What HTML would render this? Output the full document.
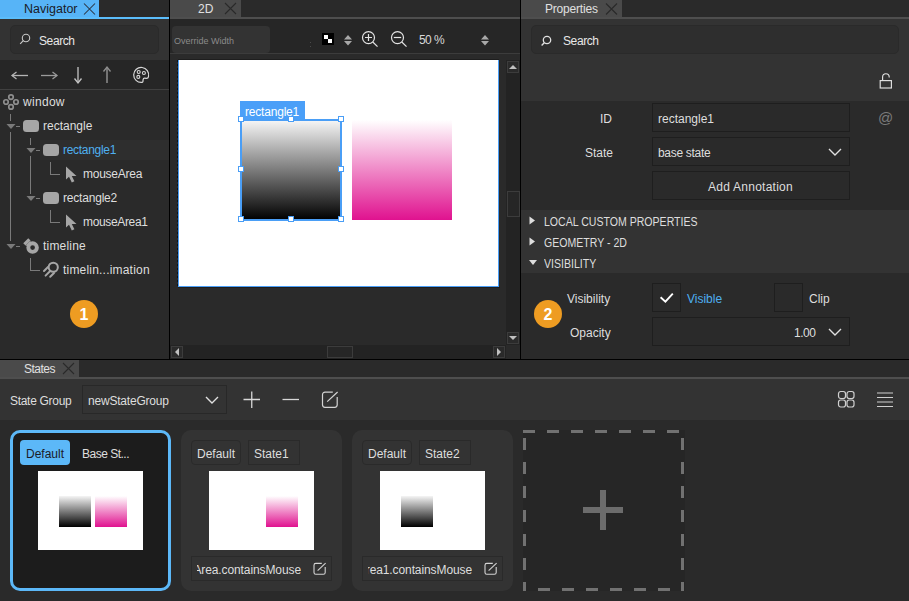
<!DOCTYPE html>
<html><head><meta charset="utf-8">
<style>
*{box-sizing:border-box;margin:0;padding:0}
html,body{width:909px;height:601px;overflow:hidden;background:#111;font-family:"Liberation Sans",sans-serif;color:#dcdcdc;font-size:12px}
.a{position:absolute}
.t{position:absolute;white-space:nowrap;line-height:1}
svg{position:absolute;overflow:visible}
</style></head><body>
<div class="a" style="left:0px;top:0px;width:169px;height:359px;background:#2a2a2a;"></div>
<div class="a" style="left:0px;top:0px;width:169px;height:17px;background:#2a2a2a;"></div>
<div class="a" style="left:0px;top:0px;width:99px;height:17px;background:#57b4f7;"></div>
<div class="a" style="left:0px;top:17px;width:169px;height:2px;background:#5bbdfb;"></div>
<div class="t" style="left:24px;top:3.00px;font-size:12.5px;color:#1b1b28;">Navigator</div>
<svg style="left:83px;top:2px;" width="13" height="13" viewBox="0 0 13 13"><path d="M1 1.5L12 12.5M12 1.5L1 12.5" stroke="#2a3340" stroke-width="1.05"/></svg>
<div class="a" style="left:0px;top:19px;width:169px;height:41px;background:#333333;"></div>
<div class="a" style="left:10px;top:25px;width:149px;height:29px;background:#2e2e2e;border:1px solid #2a2a2a;border-radius:5px"></div>
<svg style="left:18px;top:32px;" width="14" height="14" viewBox="0 0 14 14"><circle cx="8" cy="6" r="3.7" fill="none" stroke="#c8c8c8" stroke-width="1.1"/><path d="M5.3 8.7L2.2 11.8" stroke="#c8c8c8" stroke-width="1.2"/></svg>
<div class="t" style="left:39px;top:35.00px;font-size:12px;color:#e8e8e8;letter-spacing:-0.4px">Search</div>
<div class="a" style="left:0px;top:60px;width:169px;height:29px;background:#262626;"></div>
<div class="a" style="left:0px;top:89px;width:169px;height:1px;background:#404040;"></div>
<svg style="left:10px;top:70px;" width="20" height="12" viewBox="0 0 20 12"><path d="M2 5.5H18" stroke="#b4b4b4" stroke-width="1.3"/><path d="M6.5 2L2 5.5L6.5 9" fill="none" stroke="#b4b4b4" stroke-width="1.3"/></svg>
<svg style="left:39px;top:70px;" width="20" height="12" viewBox="0 0 20 12"><path d="M2 5.5H18" stroke="#9a9a9a" stroke-width="1.3"/><path d="M13.5 2L18 5.5L13.5 9" fill="none" stroke="#9a9a9a" stroke-width="1.3"/></svg>
<svg style="left:72px;top:65px;" width="12" height="20" viewBox="0 0 12 20"><path d="M6 2V18" stroke="#c4c4c4" stroke-width="1.3"/><path d="M2.5 13.5L6 18L9.5 13.5" fill="none" stroke="#c4c4c4" stroke-width="1.3"/></svg>
<svg style="left:101px;top:65px;" width="12" height="20" viewBox="0 0 12 20"><path d="M6 2V18" stroke="#8e8e8e" stroke-width="1.5"/><path d="M2.5 6.5L6 2L9.5 6.5" fill="none" stroke="#8e8e8e" stroke-width="1.3"/></svg>
<svg style="left:132px;top:66px;" width="18" height="18" viewBox="0 0 18 18"><path d="M9.8 16.4A7.5 7.5 0 1 1 16.5 10.6Q16.2 12.4 14.2 12.3L12.8 12.1Q11.3 12 11.1 13.6L10.9 15.6Q10.7 16.4 9.8 16.4Z" fill="none" stroke="#d8d8d8" stroke-width="1.2"/><g fill="none" stroke="#d8d8d8" stroke-width="1.1"><circle cx="6.7" cy="6" r="1.5"/><circle cx="11.9" cy="7" r="1.5"/><circle cx="6.3" cy="10.9" r="1.5"/></g></svg>
<div class="a" style="left:40px;top:140px;width:129px;height:20px;background:#2e2e2e;"></div>
<svg style="left:2px;top:92px;" width="20" height="20" viewBox="0 0 20 20"><g fill="none" stroke="#8e8e8e" stroke-width="1.7"><circle cx="9" cy="5.1" r="2.25"/><circle cx="4" cy="10" r="2.25"/><circle cx="14" cy="10" r="2.25"/><circle cx="9" cy="14.9" r="2.25"/></g></svg>
<div class="t" style="left:23px;top:96.00px;font-size:12px;color:#dedede;letter-spacing:0.3px">window</div>
<div class="a" style="left:10px;top:114px;width:1px;height:7px;background:#7a7a7a;"></div>
<div class="a" style="left:10px;top:132px;width:1px;height:109px;background:#7a7a7a;"></div>
<svg style="left:5.5px;top:124px;" width="10" height="6" viewBox="0 0 10 6"><path d="M0.5 0H9.5L5 5Z" fill="#7a7a7a"/></svg>
<div class="a" style="left:16px;top:126px;width:4px;height:1px;background:#7a7a7a;"></div>
<div class="a" style="left:23px;top:120px;width:16px;height:12px;background:#a6a6a6;border-radius:3.5px"></div>
<div class="t" style="left:43px;top:120.00px;font-size:12px;color:#dedede;">rectangle</div>
<div class="a" style="left:30px;top:138px;width:1px;height:7px;background:#7a7a7a;"></div>
<div class="a" style="left:30px;top:156px;width:1px;height:38px;background:#7a7a7a;"></div>
<svg style="left:25.5px;top:148px;" width="10" height="6" viewBox="0 0 10 6"><path d="M0.5 0H9.5L5 5Z" fill="#7a7a7a"/></svg>
<div class="a" style="left:36px;top:150px;width:4px;height:1px;background:#7a7a7a;"></div>
<div class="a" style="left:43px;top:144px;width:16px;height:12px;background:#a6a6a6;border-radius:3.5px"></div>
<div class="t" style="left:63px;top:144.00px;font-size:12px;color:#4fb0f0;letter-spacing:-0.3px">rectangle1</div>
<div class="a" style="left:50px;top:162px;width:1px;height:13px;background:#7a7a7a;"></div>
<div class="a" style="left:50px;top:174px;width:10px;height:1px;background:#7a7a7a;"></div>
<svg style="left:65px;top:166px;" width="12" height="17" viewBox="0 0 12 17"><path d="M1 0.5V13.5L4 10.8L6.8 16.5L9.4 15.3L6.8 10H11.5Z" fill="#a6a6a6"/></svg>
<div class="t" style="left:83px;top:168.00px;font-size:12px;color:#dedede;letter-spacing:-0.25px">mouseArea</div>
<svg style="left:25.5px;top:196px;" width="10" height="6" viewBox="0 0 10 6"><path d="M0.5 0H9.5L5 5Z" fill="#7a7a7a"/></svg>
<div class="a" style="left:36px;top:198px;width:4px;height:1px;background:#7a7a7a;"></div>
<div class="a" style="left:43px;top:192px;width:16px;height:12px;background:#a6a6a6;border-radius:3.5px"></div>
<div class="t" style="left:63px;top:192.00px;font-size:12px;color:#dedede;letter-spacing:-0.2px">rectangle2</div>
<div class="a" style="left:50px;top:210px;width:1px;height:13px;background:#7a7a7a;"></div>
<div class="a" style="left:50px;top:222px;width:10px;height:1px;background:#7a7a7a;"></div>
<svg style="left:65px;top:214px;" width="12" height="17" viewBox="0 0 12 17"><path d="M1 0.5V13.5L4 10.8L6.8 16.5L9.4 15.3L6.8 10H11.5Z" fill="#a6a6a6"/></svg>
<div class="t" style="left:83px;top:216.00px;font-size:12px;color:#dedede;letter-spacing:-0.35px">mouseArea1</div>
<svg style="left:5.5px;top:244px;" width="10" height="6" viewBox="0 0 10 6"><path d="M0.5 0H9.5L5 5Z" fill="#7a7a7a"/></svg>
<div class="a" style="left:16px;top:246px;width:4px;height:1px;background:#7a7a7a;"></div>
<svg style="left:22px;top:236px;" width="20" height="20" viewBox="0 0 20 20"><circle cx="10.6" cy="11.6" r="4.3" fill="none" stroke="#a6a6a6" stroke-width="3.9"/><path d="M2.4 8.4L7.4 3.4" stroke="#a6a6a6" stroke-width="3.3"/><path d="M3.6 9.6L8.2 5L9.8 8L7.2 10.6Z" fill="#a6a6a6"/></svg>
<div class="t" style="left:43px;top:240.00px;font-size:12px;color:#dedede;letter-spacing:0.2px">timeline</div>
<div class="a" style="left:30px;top:258px;width:1px;height:13px;background:#7a7a7a;"></div>
<div class="a" style="left:30px;top:270px;width:10px;height:1px;background:#7a7a7a;"></div>
<svg style="left:43px;top:261px;" width="17" height="17" viewBox="0 0 17 17"><g fill="none" stroke="#a6a6a6" stroke-width="2" stroke-linecap="round"><circle cx="10.25" cy="6.25" r="4.6"/><path d="M1 10L5 6M2.6 14.6L7.4 9.8M7.2 15.8L11 12"/></g></svg>
<div class="t" style="left:63px;top:264.00px;font-size:12px;color:#dedede;letter-spacing:0.2px">timelin...imation</div>
<div class="a" style="left:70px;top:300px;width:28px;height:28px;border-radius:50%;background:#ee9c22"></div>
<div class="t" style="left:79.5px;top:307.00px;font-size:16px;color:#ffffff;font-weight:bold">1</div>
<div class="a" style="left:169px;top:0px;width:1px;height:359px;background:#000;"></div>
<div class="a" style="left:520px;top:0px;width:1px;height:359px;background:#000;"></div>
<div class="a" style="left:0px;top:359px;width:909px;height:1px;background:#000;"></div>
<div class="a" style="left:170px;top:0px;width:350px;height:359px;background:#2a2a2a;"></div>
<div class="a" style="left:170px;top:0px;width:350px;height:17px;background:#2a2a2a;"></div>
<div class="a" style="left:170px;top:0px;width:71px;height:17px;background:#4a4a4a;"></div>
<div class="a" style="left:170px;top:17px;width:350px;height:2px;background:#4e4e4e;"></div>
<div class="t" style="left:198px;top:3.00px;font-size:12px;color:#e0e0e0;">2D</div>
<svg style="left:224px;top:2px;" width="13" height="13" viewBox="0 0 13 13"><path d="M1 1L12 12M12 1L1 12" stroke="#2a2a2a" stroke-width="1.1"/></svg>
<div class="a" style="left:170px;top:19px;width:350px;height:34px;background:#262626;"></div>
<div class="a" style="left:172px;top:26px;width:98px;height:27px;background:#333333;border-radius:4px"></div>
<div class="t" style="left:174px;top:37.00px;font-size:9px;color:#8a8a8a;">Override Width</div>
<div class="a" style="left:170px;top:53px;width:350px;height:1px;background:#3c3c3c;"></div>
<div class="a" style="left:310px;top:42px;width:1px;height:1px;background:#4a4a4a;"></div>
<div class="a" style="left:310px;top:46px;width:1px;height:1px;background:#4a4a4a;"></div>
<div class="a" style="left:322px;top:33px;width:12px;height:12px;background:#000;"></div>
<div class="a" style="left:324px;top:35px;width:4px;height:4px;background:#fff;"></div>
<div class="a" style="left:328px;top:39px;width:4px;height:4px;background:#fff;"></div>
<svg style="left:344px;top:34.5px;" width="8" height="11" viewBox="0 0 8 11"><path d="M0 4.5L4 0L8 4.5Z M0 6L4 10.5L8 6Z" fill="#a8a8a8"/></svg>
<svg style="left:360px;top:30px;" width="20" height="18" viewBox="0 0 20 18"><g fill="none" stroke="#e4e4e4" stroke-width="1.2"><circle cx="8.5" cy="7.6" r="6"/><path d="M12.8 12L17.5 16.6"/><path d="M5 7.5H12M8.5 4V11"/></g></svg>
<svg style="left:389px;top:30px;" width="20" height="18" viewBox="0 0 20 18"><g fill="none" stroke="#e4e4e4" stroke-width="1.2"><circle cx="8.5" cy="7.6" r="6"/><path d="M12.8 12L17.5 16.6"/><path d="M4.8 7.5H12.2"/></g></svg>
<div class="t" style="left:419px;top:34.00px;font-size:12px;color:#d8d8d8;letter-spacing:-0.6px">50 %</div>
<svg style="left:481px;top:34.5px;" width="8" height="11" viewBox="0 0 8 11"><path d="M0 4.5L4 0L8 4.5Z M0 6L4 10.5L8 6Z" fill="#a8a8a8"/></svg>
<div class="a" style="left:178px;top:60px;width:321px;height:227px;background:#ffffff;border:1px solid #4a9ff8;border-top:0"></div>
<div class="a" style="left:177px;top:60px;width:1px;height:227px;background:repeating-linear-gradient(#111 0 2px,transparent 2px 4px);"></div>
<div class="a" style="left:178px;top:59px;width:321px;height:1px;background:#1e1e1e;"></div>
<div class="a" style="left:178px;top:287px;width:322px;height:1px;background:#1e1e1e;"></div>
<div class="a" style="left:241px;top:120px;width:101px;height:100px;background:linear-gradient(#f7f7f7,#000)"></div>
<div class="a" style="left:352px;top:120px;width:100px;height:100px;background:linear-gradient(#ffffff,#e0128f)"></div>
<div class="a" style="left:240px;top:101px;width:65px;height:19px;background:#4a9ff8;"></div>
<div class="t" style="left:245px;top:106.00px;font-size:12px;color:#ffffff;letter-spacing:-0.2px">rectangle1</div>
<div class="a" style="left:240px;top:119px;width:102px;height:102px;border:2px solid #4a9ef6"></div>
<div class="a" style="left:238px;top:116px;width:6px;height:6px;background:#fff;border:1px solid #4a9ef6"></div>
<div class="a" style="left:238px;top:166px;width:6px;height:6px;background:#fff;border:1px solid #4a9ef6"></div>
<div class="a" style="left:238px;top:216px;width:6px;height:6px;background:#fff;border:1px solid #4a9ef6"></div>
<div class="a" style="left:288px;top:116px;width:6px;height:6px;background:#fff;border:1px solid #4a9ef6"></div>
<div class="a" style="left:288px;top:216px;width:6px;height:6px;background:#fff;border:1px solid #4a9ef6"></div>
<div class="a" style="left:338px;top:116px;width:6px;height:6px;background:#fff;border:1px solid #4a9ef6"></div>
<div class="a" style="left:338px;top:166px;width:6px;height:6px;background:#fff;border:1px solid #4a9ef6"></div>
<div class="a" style="left:338px;top:216px;width:6px;height:6px;background:#fff;border:1px solid #4a9ef6"></div>
<div class="a" style="left:506px;top:60px;width:14px;height:285px;background:#232323;"></div>
<div class="a" style="left:507px;top:61px;width:12px;height:12px;background:#2a2a2a;border:1px solid #3c3c3c"></div>
<svg style="left:509px;top:64px;" width="8" height="6" viewBox="0 0 8 6"><path d="M0 5L4 1L8 5Z" fill="#c0c0c0"/></svg>
<div class="a" style="left:507px;top:191px;width:13px;height:26px;background:#262626;border:1px solid #3c3c3c"></div>
<div class="a" style="left:507px;top:332px;width:12px;height:12px;background:#2a2a2a;border:1px solid #3c3c3c"></div>
<svg style="left:509px;top:335px;" width="8" height="6" viewBox="0 0 8 6"><path d="M0 1H8L4 5Z" fill="#c0c0c0"/></svg>
<div class="a" style="left:170px;top:345px;width:336px;height:14px;background:#232323;"></div>
<div class="a" style="left:171px;top:346px;width:12px;height:12px;background:#2a2a2a;border:1px solid #3c3c3c"></div>
<svg style="left:174px;top:348px;" width="6" height="8" viewBox="0 0 6 8"><path d="M5 0V8L1 4Z" fill="#c0c0c0"/></svg>
<div class="a" style="left:327px;top:346px;width:26px;height:12px;background:#262626;border:1px solid #3c3c3c"></div>
<div class="a" style="left:493px;top:346px;width:12px;height:12px;background:#2a2a2a;border:1px solid #3c3c3c"></div>
<svg style="left:496px;top:348px;" width="6" height="8" viewBox="0 0 6 8"><path d="M1 0V8L5 4Z" fill="#c0c0c0"/></svg>
<div class="a" style="left:521px;top:0px;width:388px;height:359px;background:#2a2a2a;"></div>
<div class="a" style="left:521px;top:0px;width:388px;height:17px;background:#2a2a2a;"></div>
<div class="a" style="left:521px;top:0px;width:101px;height:17px;background:#4a4a4a;"></div>
<div class="a" style="left:521px;top:17px;width:388px;height:2px;background:#4e4e4e;"></div>
<div class="t" style="left:545px;top:3.00px;font-size:12px;color:#e0e0e0;letter-spacing:-0.2px">Properties</div>
<svg style="left:605px;top:2px;" width="13" height="13" viewBox="0 0 13 13"><path d="M1 1.5L12 12.5M12 1.5L1 12.5" stroke="#2a2a2a" stroke-width="1.1"/></svg>
<div class="a" style="left:521px;top:19px;width:388px;height:82px;background:#333333;"></div>
<div class="a" style="left:531px;top:25px;width:368px;height:29px;background:#2e2e2e;border:1px solid #2a2a2a;border-radius:5px"></div>
<svg style="left:538.5px;top:33.5px;" width="14" height="14" viewBox="0 0 14 14"><circle cx="8" cy="6" r="3.7" fill="none" stroke="#e0e0e0" stroke-width="1.3"/><path d="M5.3 8.7L2.6 11.4" stroke="#e0e0e0" stroke-width="1.4"/></svg>
<div class="t" style="left:563px;top:35.00px;font-size:12px;color:#e8e8e8;letter-spacing:-0.4px">Search</div>
<svg style="left:878px;top:72px;" width="16" height="18" viewBox="0 0 16 18"><path d="M4.6 8.6V5A3.3 3.3 0 0 1 11.2 5V5.6" fill="none" stroke="#e2e2e2" stroke-width="1.15"/><rect x="2.2" y="8.6" width="11.2" height="7.4" fill="none" stroke="#e2e2e2" stroke-width="1.15"/></svg>
<div class="t" style="left:600px;top:113.00px;font-size:12px;color:#dedede;">ID</div>
<div class="a" style="left:652px;top:103px;width:198px;height:29px;background:transparent;border:1px solid #1e1e1e"></div>
<div class="t" style="left:658px;top:113.00px;font-size:12px;color:#dedede;">rectangle1</div>
<div class="t" style="left:878px;top:110.00px;font-size:15px;color:#7a7a7a;">@</div>
<div class="t" style="left:585px;top:147.00px;font-size:12px;color:#dedede;">State</div>
<div class="a" style="left:652px;top:137px;width:198px;height:29px;background:transparent;border:1px solid #1e1e1e"></div>
<div class="t" style="left:658px;top:147.00px;font-size:12px;color:#dedede;letter-spacing:-0.3px">base state</div>
<svg style="left:828px;top:148px;" width="14" height="9" viewBox="0 0 14 9"><path d="M1 1L7 7L13 1" fill="none" stroke="#e0e0e0" stroke-width="1.4"/></svg>
<div class="a" style="left:652px;top:171px;width:198px;height:29px;background:transparent;border:1px solid #1e1e1e"></div>
<div class="t" style="left:708px;top:181.00px;font-size:12px;color:#dedede;letter-spacing:0.25px">Add Annotation</div>
<div class="a" style="left:521px;top:210px;width:388px;height:63px;background:#333333;"></div>
<svg style="left:529px;top:216px;" width="7" height="9" viewBox="0 0 7 9"><path d="M0.5 0.5L6 4.5L0.5 8.5Z" fill="#dedede"/></svg>
<div class="t" style="left:544px;top:216.00px;font-size:12px;color:#dedede;transform:scaleX(0.88);transform-origin:0 0">LOCAL CUSTOM PROPERTIES</div>
<svg style="left:529px;top:237px;" width="7" height="9" viewBox="0 0 7 9"><path d="M0.5 0.5L6 4.5L0.5 8.5Z" fill="#dedede"/></svg>
<div class="t" style="left:544px;top:237.00px;font-size:12px;color:#dedede;transform:scaleX(0.88);transform-origin:0 0">GEOMETRY - 2D</div>
<svg style="left:529px;top:260px;" width="9" height="7" viewBox="0 0 9 7"><path d="M0 0H8L4 5Z" fill="#dedede"/></svg>
<div class="t" style="left:544px;top:258.00px;font-size:12px;color:#dedede;transform:scaleX(0.88);transform-origin:0 0">VISIBILITY</div>
<div class="t" style="left:567px;top:293.00px;font-size:12px;color:#dedede;">Visibility</div>
<div class="a" style="left:652px;top:283px;width:29px;height:29px;background:transparent;border:1px solid #1e1e1e"></div>
<svg style="left:659px;top:290px;" width="15" height="14" viewBox="0 0 15 14"><path d="M1.6 7.3L6.4 11.6L13.8 3.6" fill="none" stroke="#ffffff" stroke-width="1.9"/></svg>
<div class="t" style="left:687px;top:293.00px;font-size:12px;color:#4fb0f0;">Visible</div>
<div class="a" style="left:774px;top:283px;width:29px;height:29px;background:transparent;border:1px solid #1e1e1e"></div>
<div class="t" style="left:809px;top:293.00px;font-size:12px;color:#dedede;">Clip</div>
<div class="t" style="left:570px;top:327.00px;font-size:12px;color:#dedede;">Opacity</div>
<div class="a" style="left:652px;top:317px;width:198px;height:29px;background:transparent;border:1px solid #1e1e1e"></div>
<div class="t" style="left:794px;top:327.00px;font-size:12px;color:#dedede;letter-spacing:-0.5px">1.00</div>
<svg style="left:828px;top:328px;" width="14" height="9" viewBox="0 0 14 9"><path d="M1 1L7 7L13 1" fill="none" stroke="#e0e0e0" stroke-width="1.4"/></svg>
<div class="a" style="left:534px;top:300px;width:28px;height:28px;border-radius:50%;background:#ee9c22"></div>
<div class="t" style="left:543.5px;top:307.00px;font-size:16px;color:#ffffff;font-weight:bold">2</div>
<div class="a" style="left:0px;top:360px;width:909px;height:241px;background:#2a2a2a;"></div>
<div class="a" style="left:0px;top:360px;width:909px;height:17px;background:#2a2a2a;"></div>
<div class="a" style="left:0px;top:360px;width:79px;height:17px;background:#4a4a4a;"></div>
<div class="a" style="left:0px;top:377px;width:909px;height:2px;background:#4e4e4e;"></div>
<div class="t" style="left:24px;top:363.00px;font-size:12px;color:#e0e0e0;letter-spacing:-0.5px">States</div>
<svg style="left:62px;top:362px;" width="13" height="13" viewBox="0 0 13 13"><path d="M1 1L12 12M12 1L1 12" stroke="#2a2a2a" stroke-width="1.1"/></svg>
<div class="a" style="left:0px;top:379px;width:909px;height:41px;background:#333333;"></div>
<div class="t" style="left:10px;top:395.00px;font-size:12px;color:#dedede;letter-spacing:-0.3px">State Group</div>
<div class="a" style="left:82px;top:385px;width:145px;height:29px;background:transparent;border:1px solid #282828"></div>
<div class="t" style="left:88px;top:395.00px;font-size:12px;color:#dedede;letter-spacing:-0.2px">newStateGroup</div>
<svg style="left:205px;top:396px;" width="14" height="9" viewBox="0 0 14 9"><path d="M1 1L7 7L13 1" fill="none" stroke="#e0e0e0" stroke-width="1.4"/></svg>
<svg style="left:242px;top:390px;" width="20" height="20" viewBox="0 0 20 20"><path d="M1.5 9.5H18M9.75 1.5V18" stroke="#d8d8d8" stroke-width="1.3"/></svg>
<svg style="left:281px;top:390px;" width="20" height="20" viewBox="0 0 20 20"><path d="M1.5 9.5H18" stroke="#d8d8d8" stroke-width="1.3"/></svg>
<svg style="left:320px;top:389px;" width="20" height="20" viewBox="0 0 20 20"><path d="M12.8 3.2H5A2.5 2.5 0 0 0 2.5 5.7V15.8A2.5 2.5 0 0 0 5 18.3H14.7A2.5 2.5 0 0 0 17.2 15.8V8" fill="none" stroke="#d4d4d4" stroke-width="1.2"/><path d="M7.2 12.6L17.6 3" stroke="#d4d4d4" stroke-width="1.2"/></svg>
<svg style="left:837px;top:390px;" width="20" height="20" viewBox="0 0 20 20"><g fill="none" stroke="#d0d0d0" stroke-width="1.2"><rect x="1.5" y="1.5" width="7" height="7" rx="2.2"/><rect x="10" y="1.5" width="7" height="7" rx="2.2"/><rect x="1.5" y="10" width="7" height="7" rx="2.2"/><rect x="10" y="10" width="7" height="7" rx="2.2"/></g></svg>
<svg style="left:876px;top:391px;" width="18" height="18" viewBox="0 0 18 18"><path d="M1 2H17M1 6.5H17M1 11H17M1 15.5H17" stroke="#d0d0d0" stroke-width="1.2"/></svg>
<div class="a" style="left:10px;top:430px;width:161px;height:161px;border:3px solid #5cb8f8;border-radius:10px;background:#1c1c1c"></div>
<div class="a" style="left:20px;top:440px;width:50px;height:25px;background:#5cb8f8;border-radius:4px"></div>
<div class="t" style="left:26px;top:448.00px;font-size:12px;color:#1b1b28;">Default</div>
<div class="t" style="left:82px;top:448.00px;font-size:12px;color:#dedede;letter-spacing:-0.5px">Base St...</div>
<div class="a" style="left:38px;top:471px;width:105px;height:79px;background:#ffffff;"></div>
<div class="a" style="left:59px;top:496px;width:32px;height:31px;background:linear-gradient(#f5f5f5,#000)"></div>
<div class="a" style="left:95px;top:496px;width:32px;height:31px;background:linear-gradient(#ffffff,#e0128f)"></div>
<div class="a" style="left:181px;top:430px;width:161px;height:161px;background:#333333;border-radius:10px"></div>
<div class="a" style="left:191px;top:440px;width:50px;height:25px;background:transparent;border:1px solid #2a2a2a;border-radius:4px"></div>
<div class="t" style="left:197px;top:448.00px;font-size:12px;color:#dedede;">Default</div>
<div class="a" style="left:248px;top:440px;width:52px;height:25px;background:transparent;border:1px solid #2a2a2a"></div>
<div class="t" style="left:254px;top:448.00px;font-size:12px;color:#dedede;">State1</div>
<div class="a" style="left:209px;top:471px;width:105px;height:79px;background:#ffffff;"></div>
<div class="a" style="left:266px;top:496px;width:32px;height:31px;background:linear-gradient(#ffffff,#e0128f)"></div>
<div class="a" style="left:191px;top:556px;width:141px;height:25px;background:transparent;border:1px solid #2a2a2a"></div>
<div class="a" style="left:197px;top:560px;width:104px;height:18px;overflow:hidden"><div class="t" style="right:0;top:4px;font-size:12px;color:#dedede;letter-spacing:-0.1px">mouseArea.containsMouse</div></div>
<svg style="left:312px;top:561px;" width="15" height="15" viewBox="0 0 15 15"><path d="M9.8 2.4H3.8A1.8 1.8 0 0 0 2 4.2V11.4A1.8 1.8 0 0 0 3.8 13.2H11.4A1.8 1.8 0 0 0 13.2 11.4V6" fill="none" stroke="#d4d4d4" stroke-width="1.1"/><path d="M5.6 9.6L13.6 2.2" stroke="#d4d4d4" stroke-width="1.1"/></svg>
<div class="a" style="left:352px;top:430px;width:161px;height:161px;background:#333333;border-radius:10px"></div>
<div class="a" style="left:362px;top:440px;width:50px;height:25px;background:transparent;border:1px solid #2a2a2a;border-radius:4px"></div>
<div class="t" style="left:368px;top:448.00px;font-size:12px;color:#dedede;">Default</div>
<div class="a" style="left:419px;top:440px;width:52px;height:25px;background:transparent;border:1px solid #2a2a2a"></div>
<div class="t" style="left:425px;top:448.00px;font-size:12px;color:#dedede;">State2</div>
<div class="a" style="left:380px;top:471px;width:105px;height:79px;background:#ffffff;"></div>
<div class="a" style="left:401px;top:496px;width:32px;height:31px;background:linear-gradient(#f5f5f5,#000)"></div>
<div class="a" style="left:362px;top:556px;width:141px;height:25px;background:transparent;border:1px solid #2a2a2a"></div>
<div class="a" style="left:368px;top:560px;width:104px;height:18px;overflow:hidden"><div class="t" style="right:0;top:4px;font-size:12px;color:#dedede;letter-spacing:-0.1px">mouseArea1.containsMouse</div></div>
<svg style="left:483px;top:561px;" width="15" height="15" viewBox="0 0 15 15"><path d="M9.8 2.4H3.8A1.8 1.8 0 0 0 2 4.2V11.4A1.8 1.8 0 0 0 3.8 13.2H11.4A1.8 1.8 0 0 0 13.2 11.4V6" fill="none" stroke="#d4d4d4" stroke-width="1.1"/><path d="M5.6 9.6L13.6 2.2" stroke="#d4d4d4" stroke-width="1.1"/></svg>
<svg style="left:522px;top:430px;" width="163" height="161" viewBox="0 0 163 161"><rect x="1" y="0" width="162" height="161" fill="#262626"/><g fill="none" stroke="#717171" stroke-width="3"><path d="M1 1.5H162" stroke-dasharray="12 12"/><path d="M2.5 8V161" stroke-dasharray="12 12"/><path d="M160.5 8V161" stroke-dasharray="12 12"/><path d="M16 159.5H162" stroke-dasharray="12 12"/></g><path d="M81 60V100M61 80H101" stroke="#6c6c6c" stroke-width="6"/></svg>
</body></html>
